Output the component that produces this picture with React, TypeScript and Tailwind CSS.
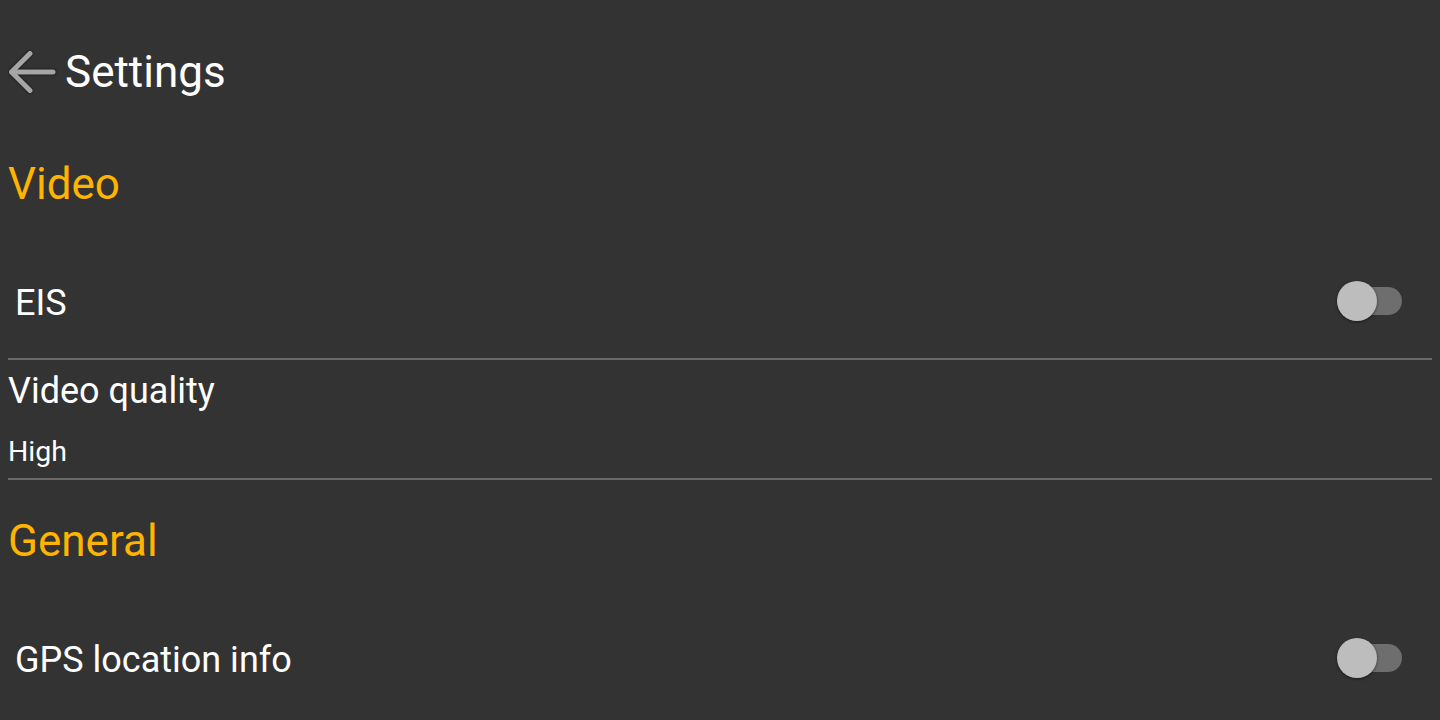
import React from 'react';

function BackArrow() {
  return (
    <svg width="48" height="44" viewBox="0 0 48 44" className="drop-shadow-[0_0_1px_rgba(0,0,0,0.9)]">
      <g fill="none" stroke="#a6a6a6" strokeWidth={5} strokeLinecap="round" strokeLinejoin="round">
        <path d="M45 22H4" />
        <path d="M22 3.5L3.5 22L22 40.5" />
      </g>
    </svg>
  );
}

function Toggle() {
  return (
    <div className="relative w-[65px] h-[40px] flex items-center">
      <div className="ml-[3px] w-[62px] h-[28px] rounded-full bg-[#6e6e6e]" />
      <div className="absolute left-0 top-0 w-[40px] h-[40px] rounded-full bg-[#bdbdbd] shadow-[0_1px_3px_rgba(0,0,0,0.5)]" />
    </div>
  );
}

function SwitchRow({ label, className }: { label: string; className: string }) {
  return (
    <div className={`flex items-center justify-between pl-[7px] pr-[30px] ${className}`}>
      <span className="pt-[4px] text-[36px] leading-[36px] text-white">{label}</span>
      <Toggle />
    </div>
  );
}

function Divider() {
  return <div className="h-[2px] bg-[#6a6a6a]" />;
}

export default function App() {
  return (
    <div
      className="w-[1440px] h-[720px] overflow-hidden bg-[#333333] px-[8px]"
      style={{ fontFamily: 'Roboto, "Noto Sans", sans-serif' }}
    >
      <div className="h-[144px] flex items-center">
        <BackArrow />
        <span className="ml-[9px] text-[44px] leading-[44px] text-white">Settings</span>
      </div>

      <div className="h-[100px] pt-[18px]">
        <span className="block text-[44px] leading-[44px] text-[#ffb400]">Video</span>
      </div>

      <SwitchRow label="EIS" className="h-[114px]" />
      <Divider />

      <div className="h-[118px] pt-[13px]">
        <div className="text-[36px] leading-[36px] text-white">Video quality</div>
        <div className="mt-[29px] text-[28.5px] leading-[28.5px] text-white">High</div>
      </div>
      <Divider />

      <div className="h-[120px] pt-[39px]">
        <span className="block text-[44px] leading-[44px] text-[#ffb400]">General</span>
      </div>

      <SwitchRow label="GPS location info" className="h-[116px]" />
    </div>
  );
}
